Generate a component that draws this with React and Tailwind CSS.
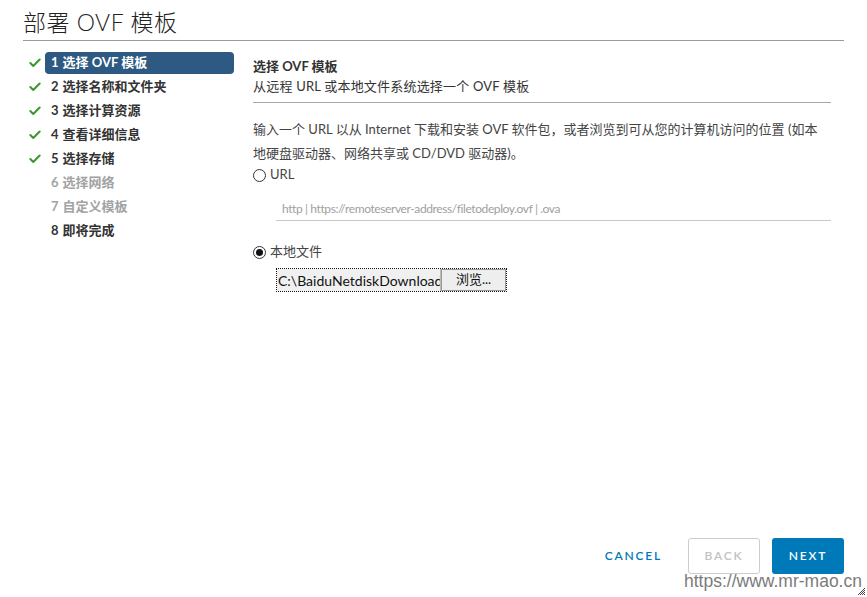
import { Check } from "lucide-react";

const steps = [
  { n: 1, label: "选择 OVF 模板", done: true, active: true },
  { n: 2, label: "选择名称和文件夹", done: true },
  { n: 3, label: "选择计算资源", done: true },
  { n: 4, label: "查看详细信息", done: true },
  { n: 5, label: "选择存储", done: true },
  { n: 6, label: "选择网络", disabled: true },
  { n: 7, label: "自定义模板", disabled: true },
  { n: 8, label: "即将完成" },
];

const font = { fontFamily: '"Lato", "Noto Sans CJK SC", sans-serif' };

function Radio({ checked }) {
  return (
    <span className="w-[13px] h-[13px] rounded-full border border-[#333] bg-white grid place-items-center shrink-0">
      {checked && <span className="w-[7px] h-[7px] rounded-full bg-[#111]" />}
    </span>
  );
}

export default function App() {
  return (
    <div
      className="relative w-[867px] h-[597px] bg-white text-[#333] flex flex-col px-[23px] overflow-hidden"
      style={font}
    >
      <h1 className="text-[23px] font-light leading-none pt-[11px] pb-[6px] border-b border-[#9a9a9a] text-[#222] tracking-[0.5px]">
        部署 OVF 模板
      </h1>

      <div className="flex flex-1 pt-[11px]">
        {/* steps */}
        <div className="w-[211px] shrink-0">
          {steps.map((s) => (
            <div key={s.n} className="flex items-center h-[22px] mb-[2px]">
              <span className="w-[22px] shrink-0 flex justify-center pl-[2px]">
                {s.done && (
                  <Check size={14} strokeWidth={3.5} className="text-[#3a9a2e]" />
                )}
              </span>
              <div
                className={
                  "flex-1 h-[22px] flex items-center gap-[4px] px-[6px] rounded-[4px] text-[13px] font-bold " +
                  (s.active
                    ? "bg-[#2e5982] text-white"
                    : s.disabled
                    ? "text-[#a3a3a3]"
                    : "text-[#333]")
                }
              >
                <span>{s.n}</span>
                <span>{s.label}</span>
              </div>
            </div>
          ))}
        </div>

        {/* content */}
        <div className="ml-[19px] w-[578px] text-[13px]">
          <div className="font-bold text-[#333] leading-[20px] pt-[4px]">选择 OVF 模板</div>
          <div className="leading-[20px] text-[#333] pb-[6px] border-b border-[#a8a8a8] tracking-[0.2px]">
            从远程 URL 或本地文件系统选择一个 OVF 模板
          </div>

          <p className="leading-[24px] mt-[14px] text-[#444] pr-[4px]">
            输入一个 URL 以从 Internet 下载和安装 OVF 软件包，或者浏览到可从您的计算机访问的位置 (如本地硬盘驱动器、网络共享或 CD/DVD 驱动器)。
          </p>

          <label className="flex items-center gap-[4px] h-[20px]">
            <Radio />
            <span className="text-[#444]">URL</span>
          </label>

          <div className="ml-[23px] mt-[13px] border-b border-[#c8c8c8] h-[23px] flex items-center px-[6px] text-[12px] tracking-[-0.4px] text-[#a0a0a0]">
            http | https://remoteserver-address/filetodeploy.ovf | .ova
          </div>

          <label className="flex items-center gap-[4px] h-[20px] mt-[21px]">
            <Radio checked />
            <span className="text-[#444]">本地文件</span>
          </label>

          <div className="ml-[23px] mt-[6px] flex w-[231px] h-[24px] border border-dotted border-[#111] text-[14px]">
            <div className="w-[164px] bg-[#f0f0f0] border-r border-[#bbb] flex items-center pl-[1px] overflow-hidden whitespace-nowrap text-[#111]">
              C:\BaiduNetdiskDownload
            </div>
            <div className="flex-1 bg-[#eeeeee] border border-[#999] flex items-center justify-center text-[13px] text-[#111]">
              浏览...
            </div>
          </div>
        </div>
      </div>

      {/* footer */}
      <div className="flex justify-end items-center gap-[12px] pb-[23px]">
        <button className="h-[36px] px-[12px] text-[12px] font-semibold tracking-[1.8px] text-[#0079b8] mr-[2px]">
          CANCEL
        </button>
        <button className="h-[36px] w-[72px] rounded-[3px] border border-[#cccccc] text-[12px] font-semibold tracking-[1.8px] text-[#c2c2c2]">
          BACK
        </button>
        <button className="h-[36px] w-[72px] rounded-[3px] bg-[#0079b8] text-[12px] font-semibold tracking-[1.8px] text-white">
          NEXT
        </button>
      </div>

      {/* watermark */}
      <div
        className="absolute left-[684px] top-[569px] text-[17.5px] text-[#7b7b7b] leading-[24px]"
        style={{ fontFamily: '"Liberation Sans", Arial, sans-serif' }}
      >
        https://www.mr-mao.cn
      </div>
      <svg className="absolute right-[2px] bottom-[2px]" width="8" height="8" viewBox="0 0 8 8">
        <path d="M8 1 L1 8 M8 3 L3 8 M8 5 L5 8 M8 7 L7 8" stroke="#444" strokeWidth="1" />
      </svg>
    </div>
  );
}
